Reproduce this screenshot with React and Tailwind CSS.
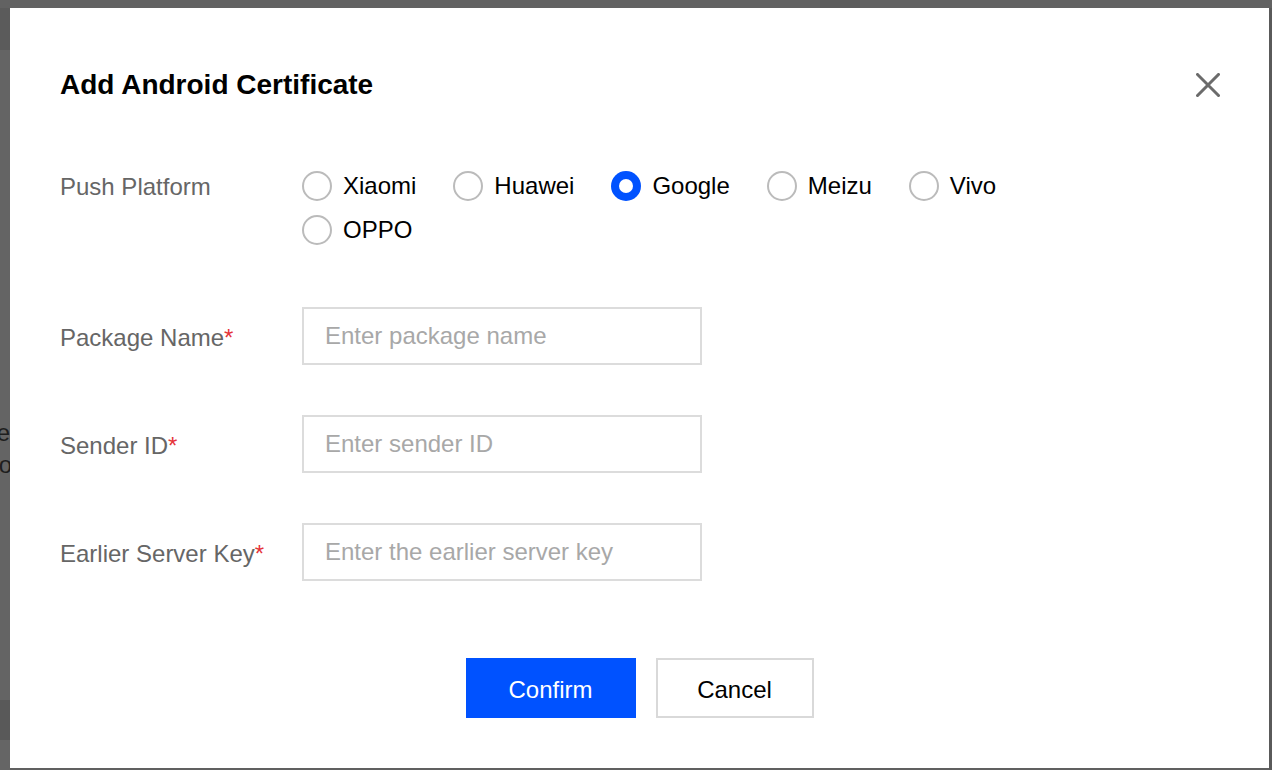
import React from "react";

const font = { fontFamily: '"Liberation Sans", Arial, Helvetica, sans-serif' };

function Radio({ label, checked }) {
  return (
    <label className="flex items-center mr-[37px] h-[44px] cursor-pointer">
      {checked ? (
        <span className="w-[30px] h-[30px] rounded-full bg-[#0052ff] flex items-center justify-center shrink-0">
          <span className="w-[14px] h-[14px] rounded-full bg-white" />
        </span>
      ) : (
        <span className="w-[30px] h-[30px] rounded-full border-2 border-[#bbbbbb] bg-white shrink-0" />
      )}
      <span className="ml-[11px] text-[24px] leading-[44px] text-black">{label}</span>
    </label>
  );
}

function Field({ label, placeholder, className = "" }) {
  return (
    <div className={"flex items-center " + className}>
      <div className="w-[242px] text-[24px] text-[#666666] leading-[30px] pt-[3px]">
        {label}
        <span className="text-[#e5343a]">*</span>
      </div>
      <input
        className="w-[400px] h-[58px] border-2 border-[#dcdcdc] pl-[21px] text-[24px] text-black placeholder:text-[#a8a8a8] outline-none"
        placeholder={placeholder}
        style={font}
      />
    </div>
  );
}

export default function App() {
  return (
    <div className="w-[1272px] h-[770px] bg-[#606060] flex flex-col overflow-hidden" style={font}>
      <div className="h-[8px] flex shrink-0">
        <div className="w-[820px] bg-[#626262]" />
        <div className="w-[40px] bg-[#5c5c5c]" />
        <div className="flex-1 bg-[#626262]" />
      </div>
      <div className="flex flex-1">
        <div className="w-[10px] flex flex-col overflow-hidden shrink-0">
          <div className="h-[42px] bg-[#5b5b5b]" />
          <div className="h-[360px] bg-[#646464]" />
          <div className="h-[90px] bg-[#646464] relative overflow-hidden">
            <span className="absolute right-0 top-[8px] text-[24px] leading-[30px] text-[#1e1e1e]">e</span>
            <span className="absolute right-[-2px] top-[40px] text-[24px] leading-[30px] text-[#1e1e1e]">o</span>
          </div>
          <div className="h-[200px] bg-[#646464]" />
          <div className="h-[40px] bg-[#595959]" />
          <div className="flex-1 bg-[#656565]" />
        </div>
        <div className="w-[1259px] h-[760px] bg-white flex flex-col pl-[50px] pt-[57px] shrink-0">
          <div className="flex items-center justify-between h-[40px] pr-[49px]">
            <h1 className="text-[28px] font-bold text-black leading-[40px]">Add Android Certificate</h1>
            <svg width="24" height="24" viewBox="0 0 24 24" className="shrink-0">
              <path d="M1.5 1.5 L22.5 22.5 M22.5 1.5 L1.5 22.5" stroke="#6b6b6b" strokeWidth="3" strokeLinecap="square" />
            </svg>
          </div>

          <div className="flex mt-[59px]">
            <div className="w-[242px] text-[24px] text-[#666666] leading-[44px] pt-[1px]">Push Platform</div>
            <div className="flex flex-wrap w-[780px]">
              <Radio label="Xiaomi" />
              <Radio label="Huawei" />
              <Radio label="Google" checked />
              <Radio label="Meizu" />
              <Radio label="Vivo" />
              <Radio label="OPPO" />
            </div>
          </div>

          <Field label="Package Name" placeholder="Enter package name" className="mt-[55px]" />
          <Field label="Sender ID" placeholder="Enter sender ID" className="mt-[50px]" />
          <Field label="Earlier Server Key" placeholder="Enter the earlier server key" className="mt-[50px]" />

          <div className="flex justify-center gap-[20px] mt-[77px] pr-[50px]">
            <button className="w-[170px] h-[60px] bg-[#0052ff] text-white text-[24px] pt-[3px]" style={font}>
              Confirm
            </button>
            <button className="w-[158px] h-[60px] border-2 border-[#d9d9d9] bg-white text-black text-[24px] pt-[3px]" style={font}>
              Cancel
            </button>
          </div>
        </div>
        <div className="flex-1 bg-[#5a5a5a]" />
      </div>
    </div>
  );
}
